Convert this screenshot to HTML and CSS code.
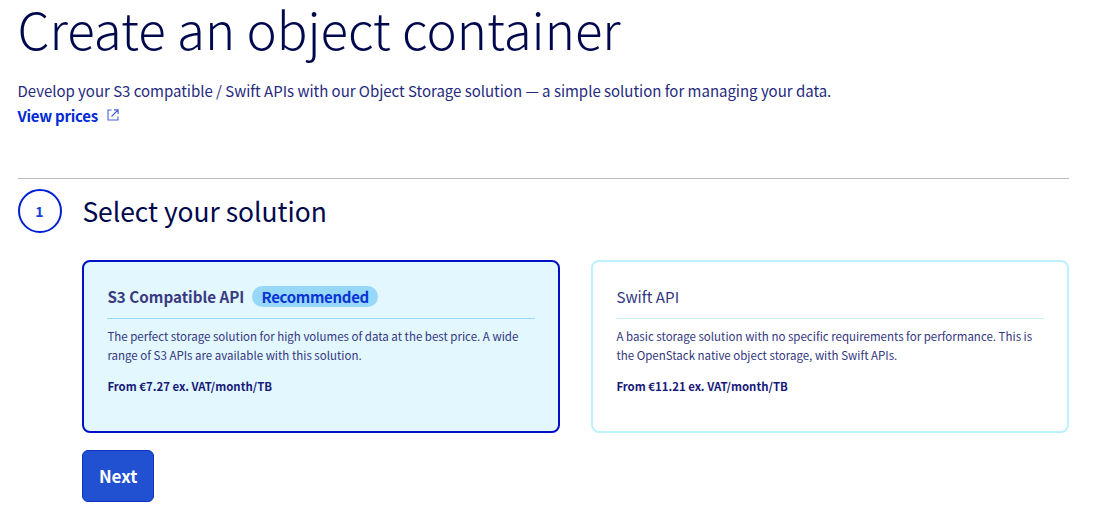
FILE: index.html
```html
<!DOCTYPE html>
<html lang="en">
<head>
<meta charset="utf-8">
<title>Create an object container</title>
<link rel="stylesheet" href="styles.css">
</head>
<body>
<main class="page">
  <h1 class="title">Create an object container</h1>
  <p class="intro">Develop your S3 compatible / Swift APIs with our Object Storage solution — a simple solution for managing your data.</p>
  <a class="prices" href="#"><span>View prices</span>
    <svg class="external" viewBox="0 0 12 12" aria-hidden="true"><path d="M4.5 1H1v10h10V7.5M7 .9h4.1V5M11 1 4.5 7.5"/></svg>
  </a>
  <section class="step">
    <div class="step-number">1</div>
    <div class="step-content">
      <h2 class="step-title">Select your solution</h2>
      <div class="cards">
        <article class="card selected">
          <h3 class="card-title"><span>S3 Compatible API</span><span class="badge">Recommended</span></h3>
          <p class="description">The perfect storage solution for high volumes of data at the best price. A wide<br>range of S3 APIs are available with this solution.</p>
          <p class="price">From €7.27 ex. VAT/month/TB</p>
        </article>
        <article class="card">
          <h3 class="card-title"><span>Swift API</span></h3>
          <p class="description">A basic storage solution with no specific requirements for performance. This is<br>the OpenStack native object storage, with Swift APIs.</p>
          <p class="price">From €11.21 ex. VAT/month/TB</p>
        </article>
      </div>
      <button class="next" type="button">Next</button>
    </div>
  </section>
</main>
</body>
</html>
```
FILE: styles.css
```css
* { box-sizing: border-box; }
body {
  margin: 0;
  background: #fff;
  color: #33367f;
  font-family: "Noto Sans CJK SC", "Open Sans", sans-serif;
  white-space: nowrap;
}
h1, h2, h3, p { margin: 0; font-weight: 400; }
.page { width: 1069.4px; padding-left: 17.5px; }
.title {
  height: 78px;
  color: #00084d;
  font-size: 51px;
  font-weight: 300;
  line-height: 56px;
}
.intro { font-size: 15px; line-height: 26px; letter-spacing: -0.02px; color: #262a7e; }
.prices {
  display: flex;
  align-items: center;
  gap: 9.5px;
  height: 22px;
  color: #0029d6;
  font-size: 15px;
  font-weight: 700;
  letter-spacing: -0.25px;
  text-decoration: none;
}
.external { width: 12px; height: 12px; fill: none; stroke: #4560d8; stroke-width: 1.1; }
.step {
  display: flex;
  gap: 20.9px;
  margin-top: 52px;
  padding-top: 10px;
  border-top: 1px solid #bbb;
}
.step-number {
  flex: none;
  width: 44px;
  height: 44px;
  border: 2px solid #0020d2;
  border-radius: 50%;
  color: #1a3fd6;
  font-size: 14px;
  font-weight: 700;
  line-height: 41px;
  text-align: center;
}
.step-content { flex: 1; }
.step-title { height: 71px; color: #00084d; font-size: 26.4px; line-height: 43px; }
.cards { display: grid; grid-template-columns: 1fr 1fr; gap: 31px; }
.card {
  height: 173px;
  padding: 22px 23px;
  border: 2px solid #bef1ff;
  border-radius: 8px;
}
.selected { border-color: #0010c4; background: #e2f7fe; }
.card-title {
  display: flex;
  align-items: center;
  gap: 8px;
  height: 35px;
  padding-bottom: 9px;
  border-bottom: 1px solid #caeffd;
  font-size: 15.2px;
}
.card-title > span { height: 25px; line-height: 25px; }
.selected .card-title { border-bottom-color: #97d9f8; font-weight: 700; color: #3a3a80; }
.card-title .badge {
  height: 21px;
  padding: 0 9px;
  border-radius: 11px;
  background: #97d8f9;
  color: #0b35d3;
  font-size: 15px;
  font-weight: 700;
  letter-spacing: -0.3px;
  line-height: 21px;
}
.description { padding-top: 8px; font-size: 11.5px; line-height: 19px; }
.price { padding-top: 12px; color: #17197a; font-size: 11.4px; font-weight: 700; line-height: 19px; }
.next {
  display: block;
  width: 71.5px;
  height: 52px;
  margin-top: 17px;
  padding: 0;
  border: 1px solid #0b31c8;
  border-radius: 6px;
  background: #2150d0;
  color: #fff;
  font: 700 17px/50px "Noto Sans CJK SC", "Open Sans", sans-serif;
}
```
